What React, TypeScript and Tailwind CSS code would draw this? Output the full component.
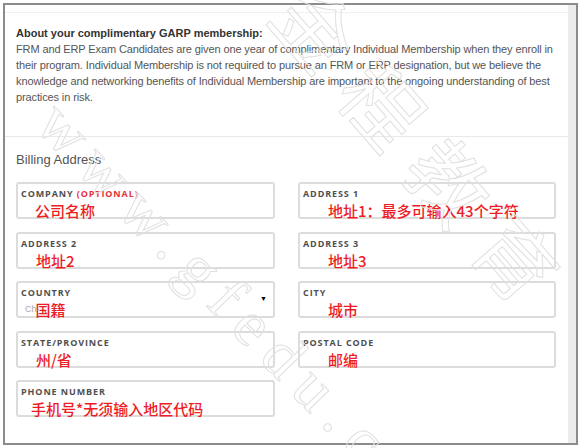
import React from 'react';

type Field = {
  label: string;
  optional?: boolean;
  value: string;
  pad: string;
  select?: boolean;
};

const left: Field[] = [
  { label: 'Company', optional: true, value: '公司名称', pad: 'pl-[14px]' },
  { label: 'Address 2', value: '地址2', pad: 'pl-[15px]' },
  { label: 'Country', value: '国籍', pad: 'pl-[4px]', select: true },
  { label: 'State/Province', value: '州/省', pad: 'pl-[15px]' },
  { label: 'Phone Number', value: '手机号*无须输入地区代码', pad: 'pl-[10px]' },
];

const right: Field[] = [
  { label: 'Address 1', value: '地址1：最多可输入43个字符', pad: 'pl-[25px]' },
  { label: 'Address 3', value: '地址3', pad: 'pl-[25px]' },
  { label: 'City', value: '城市', pad: 'pl-[25px]' },
  { label: 'Postal Code', value: '邮编', pad: 'pl-[25px]' },
];

const intro = [
  'FRM and ERP Exam Candidates are given one year of complimentary Individual Membership when they enroll in',
  'their program. Individual Membership is not required to pursue an FRM or ERP designation, but we believe the',
  'knowledge and networking benefits of Individual Membership are important to the ongoing understanding of best',
  'practices in risk.',
];

function Box({ f }: { f: Field }) {
  return (
    <div className="relative h-[37px] rounded-[3px] border-2 border-[#dcdcdc] bg-white px-[3px]">
      <div className="pt-[4px] text-[9px] leading-[12px] font-bold uppercase tracking-[0.9px] text-[#4f4f4f] font-['Open_Sans',sans-serif]">
        {f.label}
        {f.optional && <span className="text-[#e8333a]"> (Optional)</span>}
      </div>
      <div className={`mt-[2px] flex items-center ${f.pad} text-[15px] leading-[17px] text-[#ee1c25] font-['Noto_Sans_CJK_SC',sans-serif] font-medium`}>
        {f.select && <span className="text-[9px] text-[#aaa] font-['Liberation_Sans',sans-serif] mr-[-1px]">Ch</span>}
        {f.value}
      </div>
      {f.select && <span className="absolute right-[6px] top-[12px] text-[7px] leading-[8px] text-black">▼</span>}
    </div>
  );
}

export default function App() {
  return (
    <div className="relative w-[580px] h-[448px] overflow-hidden bg-white font-['Liberation_Sans',sans-serif]">
      <div className="ml-[3px] mt-[3px] flex w-[575px] h-[442px] border-2 border-[#8c8c8c]">
        <div className="flex-1 flex flex-col">
          <div className="h-[8px] border-b border-[#f0f0f0]" />
          {/* Intro */}
          <section className="pl-[11px] pt-[12px] h-[124px] border-b border-[#e9e9e9] text-[11px] leading-[16px] text-[#555] whitespace-nowrap">
            <p className="font-bold text-[#333]">About your complimentary GARP membership:</p>
            {intro.map((line) => (
              <p key={line} className="tracking-[-0.12px]">
                {line}
              </p>
            ))}
          </section>
          {/* Billing */}
          <section className="pl-[11px] pr-[9px]">
            <h2 className="mt-[14px] text-[13px] leading-[18px] text-[#555]">Billing Address</h2>
            <div className="mt-[13px] grid grid-cols-[259px_258px] gap-x-[23px]">
              <div className="flex flex-col gap-[12.5px]">
                {left.map((f) => (
                  <Box key={f.label} f={f} />
                ))}
              </div>
              <div className="flex flex-col gap-[12.5px]">
                {right.map((f) => (
                  <Box key={f.label} f={f} />
                ))}
              </div>
            </div>
          </section>
        </div>
        <div className="w-[8px] bg-[#ececec]" />
      </div>

      {/* watermark */}
      <div className="pointer-events-none absolute left-[48px] top-[80px] origin-left rotate-[46deg] text-[64px] leading-none tracking-[13px] text-transparent [-webkit-text-stroke:1px_#e0e0e0] font-['Liberation_Serif',serif] whitespace-nowrap">
        www.gfedu.cn
      </div>
      <div className="pointer-events-none absolute left-[292px] top-[-45px] origin-left rotate-[49deg] text-[80px] leading-none tracking-[22px] text-transparent [-webkit-text-stroke:1px_#e0e0e0] font-['Noto_Sans_CJK_SC',sans-serif] whitespace-nowrap">
        金程教育
      </div>
    </div>
  );
}
